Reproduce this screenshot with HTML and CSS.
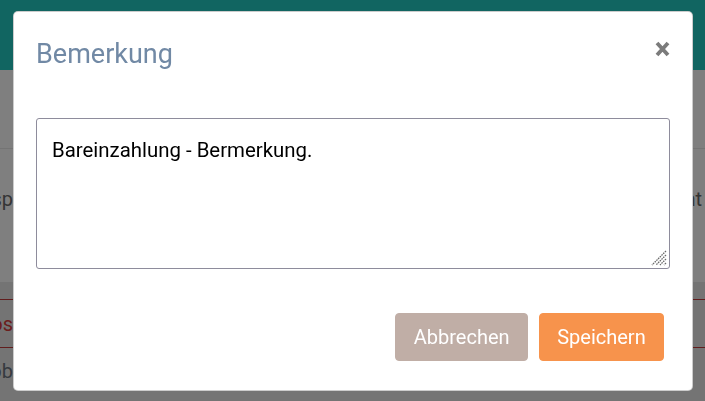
FILE: index.html
```html
<!DOCTYPE html>
<html lang="de">
<head>
<meta charset="utf-8">
<title>Bemerkung</title>
<link rel="stylesheet" href="styles.css">
</head>
<body>
<div class="page">
  <header class="topbar"></header>
  <section class="sec sec-first"></section>
  <section class="sec sec-info">
    <div class="info-row">
      <div class="clip-left"><span>Transp</span></div>
      <div class="clip-right"><span>Betrag gesamt</span></div>
    </div>
  </section>
  <section class="sec-table">
    <div class="tr tr-head"></div>
    <div class="tr tr-alert"><div class="clip-left"><span class="alert-text">Kos</span></div></div>
    <div class="tr tr-sub"><div class="clip-left"><span class="sub-text">Job</span></div></div>
  </section>
</div>

<div class="backdrop">
  <div class="modal" role="dialog" aria-labelledby="modal-title">
    <div class="modal-header">
      <h5 class="modal-title" id="modal-title">Bemerkung</h5>
      <button type="button" class="close" aria-label="Schließen">
        <svg width="15" height="16" viewBox="0 0 15 16" aria-hidden="true">
          <path d="M2 2 L13 14 M13 2 L2 14" stroke="#7b7b7b" stroke-width="3.8" stroke-linecap="butt" fill="none"/>
        </svg>
      </button>
    </div>
    <div class="modal-body">
      <div class="textarea-wrap">
        <textarea class="form-control">Bareinzahlung - Bermerkung.</textarea>
        <svg class="grip" width="18" height="18" viewBox="0 0 18 18" aria-hidden="true">
          <path d="M16 2 L2 16 M16 6 L6 16 M16 10 L10 16 M16 14 L14 16" stroke="#6a6a6a" stroke-width="1.3" stroke-dasharray="1.6 0.8" fill="none"/>
        </svg>
      </div>
    </div>
    <div class="modal-footer">
      <button type="button" class="btn btn-cancel">Abbrechen</button>
      <button type="button" class="btn btn-save">Speichern</button>
    </div>
  </div>
</div>
</body>
</html>
```

FILE: styles.css
```css
* { box-sizing: border-box; }

html, body {
  margin: 0;
  padding: 0;
  height: 100%;
}

body {
  font-family: Roboto, "Liberation Sans", Arial, sans-serif;
  background: #ffffff;
  overflow: hidden;
}

.page {
  display: flex;
  flex-direction: column;
  height: 100%;
}

.topbar {
  height: 70px;
  background: #22cac2;
  flex: none;
}

.sec-first {
  height: 79px;
  border-bottom: 1px solid #e8e8e8;
  flex: none;
}

.sec-info {
  height: 133px;
  flex: none;
  padding-top: 38px;
}

.info-row {
  display: flex;
  justify-content: space-between;
  font-size: 20px;
  color: #6a6a6a;
}

.clip-left {
  width: 13px;
  overflow: hidden;
  white-space: nowrap;
  display: flex;
  justify-content: flex-end;
}

.clip-right {
  width: 18px;
  padding-right: 3px;
  overflow: hidden;
  white-space: nowrap;
  display: flex;
  justify-content: flex-end;
}

.sec-table {
  flex: 1;
  background: #e8e8e8;
}

.tr-head {
  height: 17px;
}

.tr-alert {
  height: 49px;
  border-top: 1px solid #c23a3a;
  border-bottom: 1px solid #c23a3a;
  display: flex;
  align-items: center;
  font-size: 20px;
}

.alert-text { color: #d63b3b; }

.tr-sub {
  height: 46px;
  display: flex;
  align-items: center;
  font-size: 20px;
}

.sub-text { color: #6c7480; }

.backdrop {
  position: fixed;
  inset: 0;
  background: rgba(0, 0, 0, 0.5);
  padding: 11px 12px 0 13px;
}

.modal {
  background: #ffffff;
  border: 1px solid rgba(0, 0, 0, 0.2);
  border-radius: 5px;
  display: flex;
  flex-direction: column;
}

.modal-header {
  display: flex;
  justify-content: space-between;
  align-items: flex-start;
  padding: 26px 22px 0 22px;
}

.modal-title {
  margin: 0;
  font-size: 27px;
  font-weight: 400;
  line-height: 32px;
  color: #7189a5;
}

.close {
  border: 0;
  background: transparent;
  padding: 0;
  margin-top: 3px;
  width: 15px;
  height: 16px;
  display: block;
  cursor: pointer;
}

.close svg { display: block; }

.modal-body {
  padding: 48px 22px 0 22px;
}

.textarea-wrap {
  position: relative;
}

.form-control {
  display: block;
  width: 100%;
  height: 151px;
  border: 1px solid #8e8c9c;
  border-radius: 3px;
  padding: 16px 15px;
  font-family: Roboto, "Liberation Sans", Arial, sans-serif;
  font-size: 20.4px;
  line-height: 30px;
  color: #000000;
  resize: none;
  outline: none;
}

.grip {
  position: absolute;
  right: 2px;
  bottom: 2px;
  pointer-events: none;
}

.modal-footer {
  display: flex;
  justify-content: flex-end;
  gap: 11px;
  padding: 44px 28px 29px 22px;
}

.btn {
  font-family: Roboto, "Liberation Sans", Arial, sans-serif;
  font-size: 20px;
  line-height: 30px;
  padding: 8px 17.3px;
  border: 1px solid transparent;
  border-radius: 4px;
  color: #ffffff;
  cursor: pointer;
}

.btn-cancel {
  background: #c0aea6;
  border-color: #c0aea6;
}

.btn-save {
  background: #f7934c;
  border-color: #f7934c;
}
```
